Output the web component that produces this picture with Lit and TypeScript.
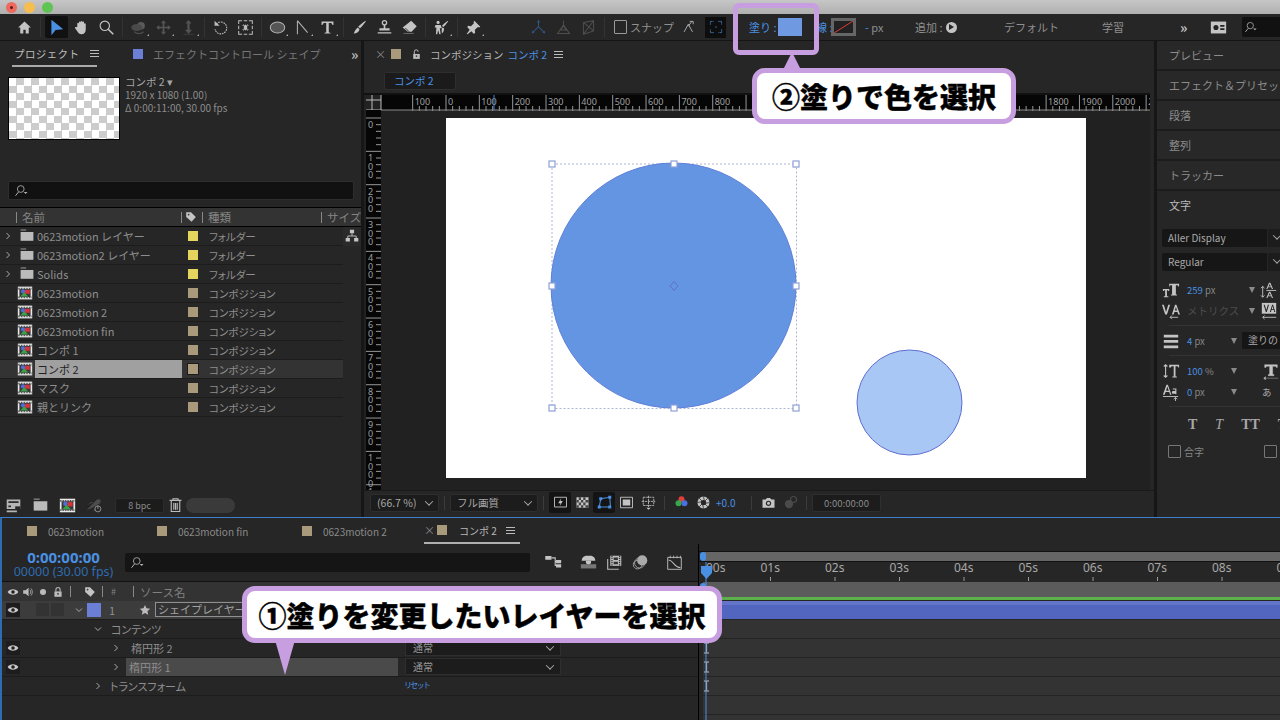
import { LitElement, html, css, svg, nothing } from "lit";
import { customElement } from "lit/decorators.js";

const I: Record<string, any> = {
  home: svg`<path d="M10 3 2.500 10H5v7h3.600v-4.500h2.800V17H15v-7h2.500z" fill="#c4c4c4"/>`,
  arrow: svg`<path d="M4 1v18l5-6 9-1z" fill="#4a90e2"/>`,
  hand: svg`<path d="M5 9V5.500a1 1 0 0 1 2 0V4a1 1 0 0 1 2 0v-.7a1 1 0 0 1 2 0V4a1 1 0 0 1 2 0v2a1 1 0 0 1 2 0v6c0 4-2 6-5 6-2.500 0-3.500-1-5-3.500L2.500 11c-.8-1.300.8-2.300 1.800-1.200z" fill="#c4c4c4"/>`,
  zoom: svg`<circle cx="8" cy="8" r="5.500" fill="none" stroke="#c4c4c4" stroke-width="1.300"/><path d="m12 12 6 6" stroke="#c4c4c4" stroke-width="1.800"/>`,
  orbit: svg`<circle cx="13" cy="8" r="4.500" fill="#5a5a5a"/><ellipse cx="8" cy="10" rx="6.500" ry="4" fill="#4a4a4a"/><path d="M5 15c3 3 8 3 11 0" fill="none" stroke="#4e4e4e" stroke-width="1.300"/>`,
  move: svg`<path d="M10 1.500 13 5h-2v4h4V7l3.500 3L15 13v-2h-4v4h2l-3 3.500L7 15h2v-4H5v2l-3.500-3L5 7v2h4V5H7z" fill="#555"/>`,
  updown: svg`<path d="M10 1.500 13 5h-2v8h2.500L10 17 6.500 13H9V5H7zM4 18h12" fill="#555" stroke="#555" stroke-width=".6"/>`,
  rotate: svg`<path d="M5 6a7 7 0 1 1-1.500 6" fill="none" stroke="#bcbcbc" stroke-width="1.300" stroke-dasharray="2 1"/><path d="M3 2v6h6z" fill="#bcbcbc"/>`,
  region: svg`<path d="M2 6V2h4M14 2h4v4M18 14v4h-4M6 18H2v-4M8 2h4M8 18h4M2 8v4M18 8v4" fill="none" stroke="#bcbcbc" stroke-width="1.200"/><path d="M6 8h2V6zM14 8h-2V6zM6 12h2v2zM14 12h-2v2z" fill="#bcbcbc"/><path d="M8 8l2-1.500L12 8v4l-2 1.500L8 12z" fill="#bcbcbc"/>`,
  ellipse: svg`<ellipse cx="10" cy="10" rx="8.500" ry="6.500" fill="#555" stroke="#b4b4b4" stroke-width="1.200"/>`,
  pen: svg`<path d="M4 2v16M4 2l12 14" fill="none" stroke="#b4b4b4" stroke-width="1.200"/>`,
  t: svg`<path d="M3 3h14v4h-1.200c-.3-1.500-1-2.200-2.800-2.200h-1.500V15c0 1 .6 1.200 2 1.300V17H6.500v-.7c1.400-.1 2-.3 2-1.300V4.800H7c-1.800 0-2.500.7-2.800 2.200H3z" fill="#c4c4c4"/>`,
  brush: svg`<path d="M17.500 2c.5.500-5 7.500-7 9L8.500 9.200C10 7 17 1.500 17.500 2zM8 10l2 2c-.3 3-3 5-7 5 1.500-1 1-4 5-7z" fill="#c4c4c4"/>`,
  stamp: svg`<circle cx="10" cy="4.500" r="2.500" fill="none" stroke="#c4c4c4" stroke-width="1.500"/><path d="M9 7h2v4h5v2.500H4V11h5zM2 15.500h16V17H2z" fill="#c4c4c4"/>`,
  eraser: svg`<path d="m12 2 6.500 6.500-6 6.500H8L2 10z" fill="#c4c4c4"/><path d="m5 10.500 4.500 4.500" stroke="#262626" stroke-width="1"/><path d="M3 17h12" stroke="#888" stroke-width=".8"/>`,
  puppet: svg`<circle cx="6" cy="4" r="1.800" fill="#c4c4c4"/><path d="M3 7h6l1.500 4H8l1 7H7.500L6 13l-1 5H3.500L4 10H2z" fill="#c4c4c4"/><path d="M18 2c.4.400-4 6-6 7.500L10.500 8C12 6 17.500 1.600 18 2zM11 10l2 1c0 3-1 5-2.500 6 0-2-1-4 .5-7z" fill="#c4c4c4"/>`,
  pin: svg`<path d="m11 2 7 7-1.500 1-1.500-.5-3.500 3.500.5 3-1.500 1.500-3-3L3 18l-1-.5 3.500-5-3-3L4 8l3 .5L10.500 5 10 3.500z" fill="#c4c4c4"/>`,
  axis1: svg`<path d="M10 9V2M10 9l-7 7M10 9l7 7" fill="none" stroke="#2f5580" stroke-width="1.200"/><path d="M10 1 8 4h4zM2 17l3.500-.8-2.700-2.700zM18 17l-3.500-.8 2.700-2.700z" fill="#2f5580"/>`,
  axis2: svg`<path d="M10 2v5M10 7l-7 10h14zM10 7l-3 6h6z" fill="none" stroke="#4e4e4e" stroke-width="1.200"/>`,
  axis3: svg`<path d="M4 4l12-2v12L4 18zM4 4l12 10M16 2 4 18" fill="none" stroke="#4e4e4e" stroke-width="1.200"/>`,
  snap: svg`<path d="M3 17 9 6l6 11M9 9l5-7M11 2h5v4" fill="none" stroke="#b4b4b4" stroke-width="1.300"/>`,
  focus: svg`<path d="M3 7V3h4M13 3h4v4M17 13v4h-4M7 17H3v-4" fill="none" stroke="#4a90e2" stroke-width="1.200" stroke-dasharray="1.500 1"/><path d="M9 10h2" stroke="#4a90e2"/>`,
  search: svg`<circle cx="9" cy="8" r="4.500" fill="none" stroke="#b4b4b4" stroke-width="1.100"/><path d="M6 12l-4 5" stroke="#b4b4b4" stroke-width="1.300"/><path d="M13 12h5l-2.500 2.500z" fill="#b4b4b4"/>`,
  interp: svg`<path d="M2 3h16v11H2zM2 16h12v2H2z" fill="#b4b4b4"/><path d="M4 5h12v2H4z" fill="#262626"/><path d="M4 10h3v2H4z" fill="#262626"/><rect x="12" y="11" width="6" height="4" fill="#262626"/>`,
  ws: svg`<path d="M1 3h18v14H1z" fill="#c4c4c4"/><circle cx="7" cy="10" r="3" fill="#222"/><path d="M12 7h5v2h-5zM12 11h5v2h-5z" fill="#222"/>`,
  folder: svg`<path d="M2 5h16v11H2z" fill="#bbb"/><path d="M2 2.500h7" stroke="#bbb"/>`,
  comp: svg`<path d="M1 2h18v16H1z" fill="#e8e8e8"/><path d="M1 4.500h18M1 15.500h18" stroke="#333" stroke-dasharray="1 1" stroke-width="2"/><path d="M3 5h14v10H3z" fill="#3b3b3b"/><circle cx="7.500" cy="8" r="2.600" fill="#4a6fd8"/><path d="M10 6h6v5h-6z" fill="#d8333a"/><path d="M4 14.500 9 9l5 5.500z" fill="#3ba24a"/>`,
  rocket: svg`<path d="M1 15 13 3l4 0v4L7 13l-3 1zM2 9l4-3 3 0zM8 17l3-4 0 3z" fill="#4c4c4c"/><circle cx="14" cy="14" r="3.500" fill="none" stroke="#999"/><path d="M14 10v4" stroke="#999"/>`,
  trash: svg`<path d="M3 4h14M7 4V2h6v2M5 4v13h10V4M8 7v8M10 7v8M12 7v8" fill="none" stroke="#bcbcbc" stroke-width="1.300"/>`,
  flow: svg`<path d="M7 1h6v5H7zM1 13h6v5H1zM13 13h6v5h-6z" fill="#c4c4c4"/><path d="M10 6v4M4 13v-3h12v3" fill="none" stroke="#c4c4c4" stroke-width="1.300"/>`,
  tlflow: svg`<path d="M1 3h6v3H1zM8 4.500h4v9h2M12 9h2" fill="none" stroke="#c4c4c4" stroke-width="1.300"/><path d="M1 3h6v3H1zM13 7h6v4h-6zM13 12h6v4h-6z" fill="#c4c4c4"/>`,
  tag: svg`<path d="M2 2h8l8 8-7 8-9-8z" fill="#c4c4c4"/><circle cx="6" cy="6" r="1.400" fill="#333"/>`,
  eye: svg`<path d="M1 10c4-6 14-6 18 0-4 6-14 6-18 0z" fill="#c8c8c8"/><circle cx="10" cy="10" r="3" fill="#222"/>`,
  speaker: svg`<path d="M2 7h4l5-4v14l-5-4H2z" fill="#bbb"/><path d="M13 6c2 2 2 6 0 8M15 4c3 3 3 9 0 12" fill="none" stroke="#bbb" stroke-width="1.200"/>`,
  dot: svg`<circle cx="10" cy="10" r="5" fill="#bbb"/>`,
  lock: svg`<path d="M4 9h12v9H4z" fill="#bbb"/><path d="M6.500 9V6a3.500 3.500 0 0 1 7 0v3" fill="none" stroke="#bbb" stroke-width="1.800"/><circle cx="10" cy="13" r="1.500" fill="#333"/>`,
  unlock: svg`<path d="M4 9h12v9H4z" fill="#bbb"/><path d="M6 9V5a3.500 3.500 0 0 1 7 0" fill="none" stroke="#bbb" stroke-width="1.800"/><circle cx="10" cy="13" r="1.500" fill="#333"/>`,
  star: svg`<path d="m10 1.500 2.600 5.600 6 .7-4.500 4.100 1.200 6.100L10 15l-5.300 3 1.200-6.100L1.400 7.800l6-.7z" fill="#bbb"/>`,
  flash: svg`<path d="M2 3h16v13H2z" fill="none" stroke="#c4c4c4" stroke-width="1.200"/><path d="m11 4-4 7h3l-1 4 4-7h-3z" fill="#c4c4c4"/>`,
  grid: svg`<path d="M2 3h16v14H2z" fill="#c4c4c4"/><path d="M5 3h3v3.500H5zM11 3h3v3.500h-3zM8 6.500h3V10H8zM14 6.500h4V10h-4zM2 6.500h3V10H2zM5 10h3v3.500H5zM11 10h3v3.500h-3zM8 13.500h3V17H8zM14 13.500h4V17h-4zM2 13.500h3V17H2z" fill="#444"/>`,
  mask: svg`<path d="M3 16 5 5l12-2 1 13z" fill="none" stroke="#4a90e2" stroke-width="1.400"/><path d="M1 14h4v4H1zM3 3h4v4H3zM15 1h4v4h-4zM15 14h4v4h-4z" fill="#4a90e2"/>`,
  safe: svg`<path d="M2 3h16v14H2z" fill="none" stroke="#c4c4c4" stroke-width="1.200"/><path d="M5 6h10v8H5z" fill="#c4c4c4"/>`,
  gridb: svg`<path d="M3 3h14v11H3zM10 1v15M1 8.500h18" fill="none" stroke="#c4c4c4" stroke-width="1.100" stroke-dasharray="3 1"/><path d="M7 17h6l-3 2.500z" fill="#c4c4c4"/>`,
  rgb: svg`<circle cx="10" cy="5.500" r="4" fill="#e0403a"/><circle cx="6" cy="11" r="4" fill="#36a84a"/><circle cx="14" cy="11" r="4" fill="#4a6fe0"/>`,
  exposure: svg`<circle cx="10" cy="10" r="8" fill="#c4c4c4"/><circle cx="10" cy="10" r="3.500" fill="#262626"/><path d="m10 2 1 5M18 10l-5 1M10 18l-1-5M2 10l5-1M4 4l4 4M16 4l-4 4M16 16l-4-4M4 16l4-4" stroke="#262626"/>`,
  camera: svg`<path d="M2 6h4l2-2h4l2 2h4v11H2z" fill="#c4c4c4"/><circle cx="10" cy="11" r="3.500" fill="#262626"/><circle cx="10" cy="11" r="2" fill="#c4c4c4"/>`,
  snapshot: svg`<circle cx="14" cy="6" r="4" fill="none" stroke="#4a4a4a" stroke-width="1.500"/><circle cx="8" cy="12" r="5.500" fill="#4a4a4a"/>`,
  shy: svg`<path d="M8 2c-4 0-6 3-6 6h16c0-3-2-6-6-6z" fill="#c4c4c4"/><path d="M7 8h6v3l-3 2-3-2z" fill="#c4c4c4"/><path d="M1 12h18v5H1z" fill="#777"/>`,
  filmstack: svg`<path d="M5 2h13v12H5z" fill="#bbb"/><path d="M7 2v12M16 2v12" stroke="#333" stroke-dasharray="1.500 1" stroke-width="1.500"/><path d="M9 4h5v3H9zM9 9h5v3H9z" fill="#333"/><path d="M2 6v12h13" fill="none" stroke="#bbb" stroke-width="1.300"/>`,
  blend: svg`<circle cx="12" cy="7.500" r="6" fill="#aaa"/><circle cx="9" cy="10.500" r="6" fill="none" stroke="#aaa"/><circle cx="6.500" cy="12.500" r="5" fill="none" stroke="#aaa"/>`,
  curve: svg`<path d="M2 4h16v14H2z" fill="none" stroke="#bbb" stroke-width="1.100"/><path d="M5 2v3M9 2v3M13 2v3M17 2v3" stroke="#bbb"/><path d="M3 7c6 0 6 9 14 9" fill="none" stroke="#bbb" stroke-width="1.200"/>`,
  tsize: svg`<path d="M8 3h11v3h-1c-.2-1-.6-1.200-1.600-1.200h-1V15h1.200v1H10v-1h1.200V4.800h-1C9.200 4.800 8.800 5 8.600 6H8zM1 9h7v2H7l-.5-.8H5.500V17H7v1H2v-1h1.500v-6.800h-1L2 11H1z" fill="#c4c4c4"/>`,
  va: svg`<path d="M0 3h2l2.500 8L7 3h2L5.500 14h-2zM7 14l4-11M11 14l3.500-11h1.500L20 14h-2l-.8-3h-3.400l-.8 3zM14.300 9.500h2.400l-1.200-4z" fill="#c4c4c4"/><path d="M9 17h9M11 15l-2 2 2 2" fill="none" stroke="#c4c4c4"/>`,
  lines: svg`<path d="M2 3h16v3H2zM2 9h16v3H2zM2 15h16v3H2z" fill="#c4c4c4"/>`,
  vscale: svg`<path d="M4 3v14M2 5l2-2 2 2M2 15l2 2 2-2" fill="none" stroke="#c4c4c4" stroke-width="1.200"/><path d="M8 3h11v3h-1c-.2-1-.6-1.200-1.600-1.200H15V16h1.500v1.200h-5V16H13V4.800h-1.400c-1 0-1.400.2-1.600 1.200H8z" fill="#c4c4c4"/>`,
  baseline: svg`<path d="M1 13 5 2h1.500l4 11H9l-1-3H4l-1 3zM4.500 8.500h3L6 4zM12 6h4v6.500h-1.200V12h-2.300c-1 0-1.500-.7-1.500-1.500S11.500 9 12.500 9h2.300V7.200H12z" fill="#c4c4c4"/><path d="M1 15h17M15 20v-4M13 18l2-2 2 2" fill="none" stroke="#c4c4c4"/>`,
  leading: svg`<path d="M7 9l3-7h1.500l3 7h-1.300l-.7-2H9l-.7 2zM9.500 6h2.500L10.800 3.200zM7 19l3-7h1.500l3 7h-1.300l-.7-2H9l-.7 2zM9.500 16h2.500l-1.200-2.800z" fill="#c4c4c4"/><path d="M3 6v12M1 8l2-2 2 2M1 16l2 2 2-2M7 10.500h11" fill="none" stroke="#c4c4c4"/>`,
  vak: svg`<path d="M2 1h16v12H2z" fill="#c4c4c4"/><path d="M4 3l2.500 8h1L10 3H8.800L7 9 5.200 3zM11 11l2.500-8h1l2.500 8h-1.200l-.5-2h-2.600l-.5 2zM13 8h2l-1-3.500z" fill="#222"/><path d="M3 17h15M5 15l-2 2 2 2" fill="none" stroke="#c4c4c4"/>`,
  hscale: svg`<path d="M3 3h14v3h-1c-.2-1-.6-1.200-1.600-1.200h-2.600V14h1.500v1.200H7V14h1.500V4.800H6c-1 0-1.400.2-1.600 1.200H3zM2 18h16M4 16l-2 2 2 2" fill="#c4c4c4" stroke="#c4c4c4" stroke-width=".5"/>`,
};

const icon = (n: string, size = 20) => html`<svg class="ic" width=${size} height=${size} viewBox="0 0 20 20">${I[n]}</svg>`;
const tool = (n: string, corner = false) => html`<span class="tool ${n === "arrow" ? "on" : ""}">${icon(n)}${corner ? html`<i class="corner"></i>` : nothing}</span>`;
const sep = () => html`<span class="sep"></span>`;

const projectRows = [
  { kind: "folder", name: "0623motion レイヤー", sw: "#e5d45e", type: "フォルダー" },
  { kind: "folder", name: "0623motion2 レイヤー", sw: "#e5d45e", type: "フォルダー" },
  { kind: "folder", name: "Solids", sw: "#e5d45e", type: "フォルダー" },
  { kind: "comp", name: "0623motion", sw: "#a99a7c", type: "コンポジション" },
  { kind: "comp", name: "0623motion 2", sw: "#a99a7c", type: "コンポジション" },
  { kind: "comp", name: "0623motion fin", sw: "#a99a7c", type: "コンポジション" },
  { kind: "comp", name: "コンポ 1", sw: "#a99a7c", type: "コンポジション" },
  { kind: "comp", name: "コンポ 2", sw: "#a99a7c", type: "コンポジション", sel: true },
  { kind: "comp", name: "マスク", sw: "#a99a7c", type: "コンポジション" },
  { kind: "comp", name: "親とリンク", sw: "#a99a7c", type: "コンポジション" },
];

function hRuler() {
  const out: any[] = [];
  const x0 = 446 - 366;
  const step = 33.34;
  for (let i = -1; i < 22; i++) {
    const x = x0 + i * step;
    const abs = x + 366;
    if (abs > 1150) continue;
    out.push(svg`<path d="M${x} 0v16" stroke="#bdbdbd" stroke-width=".8"/>`);
    for (let k = 1; k < 5; k++) out.push(svg`<path d="M${x + (k * step) / 5} 11v5" stroke="#bdbdbd" stroke-width=".8"/>`);
    // Labels behind the callout are fully hidden in the reference.
    if (abs + 20 > 752 && abs < 1016) continue;
    const label = i < 0 ? "100" : String(i * 100);
    out.push(svg`<text x=${x + 2} y="10" class="rt">${label}</text>`);
  }
  return out;
}
function vRuler() {
  const out: any[] = [];
  const step = 33.34;
  for (let i = 0; i < 12; i++) {
    const y = 8 + i * step;
    if (y > 378) continue;
    out.push(svg`<path d="M0 ${y}h15" stroke="#bdbdbd" stroke-width=".8"/>`);
    for (let k = 1; k < 5; k++) out.push(svg`<path d="M10 ${y + (k * step) / 5}h5" stroke="#bdbdbd" stroke-width=".8"/>`);
    const s = String(i * 100).split("");
    out.push(svg`<text class="rt">${s.map((c, j) => svg`<tspan x="2" y=${y + 10 + j * 8.5}>${c}</tspan>`)}</text>`);
  }
  return out;
}
function handles() {
  const pts = [[552, 164], [674, 164], [796, 164], [552, 286], [796, 286], [552, 408], [674, 408], [796, 408]];
  return pts.map(([x, y]) => svg`<rect x=${x - 3} y=${y - 3} width="6" height="6" fill="#fff" stroke="#8ea0d8" stroke-width="1.200"/>`);
}

@customElement("app-root")
export class AppRoot extends LitElement {
  static styles = css`
    :host { display: block; width: 1280px; height: 720px; position: relative; overflow: hidden; background: #161616; font-family: "Noto Sans CJK JP", "Noto Sans", sans-serif; font-size: 10px; color: #9c9c9c; }
    * { box-sizing: border-box; }
    .ic { display: block; flex: none; }
    .titlebar { height: 14px; background: linear-gradient(#c6c6c6, #b0b0b0); display: flex; align-items: center; gap: 7px; padding-left: 6px; }
    .light { width: 11px; height: 11px; border-radius: 50%; display: flex; align-items: center; justify-content: center; flex: none; }
    .light.r { background: #ee6a5f; }
    .light.r::after { content: ""; width: 3px; height: 3px; border-radius: 50%; background: #5c1a14; }
    .light.y { background: #f6bd4f; }
    .light.g { background: #5fc454; }
    .toolbar { height: 27px; background: #262626; display: flex; align-items: center; padding-left: 12px; border-bottom: 1px solid #151515; }
    .tool { width: 25px; height: 22px; display: flex; align-items: center; justify-content: center; position: relative; flex: none; }
    .tool .ic { width: 17px; height: 17px; }
    .tool.on { background: #111; border-radius: 2px; width: 23px; margin: 0 1px; }
    .corner { position: absolute; right: 2px; bottom: 2px; border: 1.500px solid transparent; border-right-color: #aaa; border-bottom-color: #aaa; }
    .sep { width: 7px; height: 20px; flex: none; position: relative; }
    .sep::after { content: ""; position: absolute; left: 3px; top: 0; bottom: 0; width: 1px; background: #333; }
    .spacer40 { width: 40px; flex: none; }
    .snapbox { width: 13px; height: 14px; border: 1.500px solid #9a9a9a; border-radius: 1px; margin-left: 6px; flex: none; }
    .tbtext { white-space: nowrap; flex: none; color: #909090; font-size: 11px; }
    .snaplabel { margin-left: 3px; width: 48px; }
    .snapicon { width: 21px; display: flex; justify-content: center; flex: none; }
    .snapicon .ic { width: 14px; height: 14px; }
    .focusbox { width: 21px; height: 21px; background: #0e0e0e; display: flex; align-items: center; justify-content: center; flex: none; margin-left: 6px; }
    .fillgroup { margin-left: 23px; display: flex; align-items: center; flex: none; color: #4a90e2; width: 53px; justify-content: space-between; font-size: 11px; white-space: nowrap; }
    .fillsw { width: 24px; height: 18px; background: #6f99e0; flex: none; }
    .strokegroup { display: flex; align-items: center; flex: none; width: 60px; gap: 1px; }
    .strokelabel { width: 14px; color: #4a90e2; font-size: 11px; white-space: nowrap; margin-left: 14px; flex: none; text-align: right; }
    .strokesw { width: 25px; height: 18px; background: #555; border: 3px solid #666; flex: none; display: block; }
    .strokesw svg { display: block; }
    .px { width: 50px; flex: none; margin-left: 3px; }
    .px b { color: #4a90e2; font-weight: 400; }
    .addgroup { display: flex; align-items: center; gap: 3px; width: 65px; flex: none; }
    .play { width: 11px; height: 11px; border-radius: 50%; background: #c4c4c4; flex: none; display: flex; align-items: center; justify-content: center; padding-left: 1px; }
    .play::after { content: ""; border-left: 5px solid #262626; border-top: 3px solid transparent; border-bottom: 3px solid transparent; }
    .wsdef { margin-left: 24px; width: 98px; font-size: 11px; flex: none; white-space: nowrap; color: #8f8f8f; }
    .wsstudy { width: 78px; font-size: 11px; flex: none; color: #8f8f8f; }
    .more { width: 18px; color: #c4c4c4; font-weight: 700; font-size: 14px; flex: none; line-height: 1; }
    .wsgap { width: 12px; flex: none; }
    .wsicon { width: 17px; flex: none; }
    .tsearch { width: 50px; height: 20px; background: #111; margin-left: 15px; display: flex; align-items: center; padding-left: 2px; flex: none; border-radius: 2px; }

    .main { height: 476px; display: flex; gap: 3px; padding-left: 0; }
    .project { width: 361px; background: #262626; display: flex; flex-direction: column; flex: none; }
    .ptabs { height: 26px; display: flex; align-items: center; position: relative; padding-left: 14px; flex: none; }
    .ptab { color: #bdbdbd; font-size: 10.500px; letter-spacing: .4px; white-space: nowrap; flex: none; }
    .ptabline { width: 85px; height: 26px; border-bottom: 2px solid #aaa; margin-left: -2px; padding-left: 2px; display: flex; align-items: center; gap: 11px; flex: none; }
    .burger { width: 9px; height: 7px; border-top: 1px solid #bbb; border-bottom: 1px solid #bbb; position: relative; flex: none; }
    .burger::after { content: ""; position: absolute; left: 0; right: 0; top: 2px; height: 1px; background: #bbb; }
    .efsw { width: 10px; height: 10px; background: #6b7fd7; margin-left: 36px; flex: none; }
    .eftext { margin-left: 10px; color: #767676; font-size: 11px; width: 174px; white-space: nowrap; flex: none; }
    .chev2 { color: #bbb; font-weight: 700; font-size: 14px; line-height: 1; margin-left: 24px; }
    .pinfo { height: 114px; display: flex; padding: 10px 0 0 8px; gap: 5px; flex: none; }
    .thumb { width: 112px; height: 63px; border: 1px solid #000; background: repeating-conic-gradient(#ccc 0 25%, #fff 0 50%) 0 0 / 15px 15px; flex: none; }
    .meta { line-height: 13px; font-size: 10px; color: #8c8c8c; margin-top: -2px; white-space: nowrap; }
    .meta .t { font-size: 10.500px; color: #a5a5a5; }
    .psearch { height: 19px; margin: 0 7px 0 8px; background: #111; border: 1px solid #2e2e2e; border-radius: 2px; display: flex; align-items: center; padding-left: 5px; flex: none; }
    .psearch .ic { width: 15px; height: 15px; }
    .phead { margin-top: 7px; height: 20px; background: #333; border-top: 1px solid #000; border-bottom: 1px solid #000; display: grid; grid-template-columns: 17px 165px 21px 119px 1fr; align-items: center; flex: none; overflow: hidden; font-size: 11.500px; color: #858585; }
    .phead > div { height: 11px; line-height: 11px; border-right: 1px solid #888; padding-left: 5px; white-space: nowrap; display: flex; align-items: center; }
    .phead > div:first-child { padding: 0; }
    .phead > div:last-child { border: none; }
    .phead .ic { width: 12px; height: 12px; margin-left: -2px; }
    .pbody { display: flex; flex: 1; min-height: 0; }
    .plist { width: 343px; flex: none; }
    .pside { flex: 1; display: flex; justify-content: center; padding-top: 2px; background: #2a2a2a; height: 19px; }
    .pside .ic { width: 14px; height: 14px; }
    .prow { height: 19px; display: grid; grid-template-columns: 35px 147px 28px 1fr; align-items: center; border-bottom: 1px solid #1c1c1c; font-size: 11px; color: #8e8e8e; white-space: nowrap; }
    .pcell0 { display: flex; align-items: center; height: 100%; }
    .arrowcell { width: 19px; padding-left: 4px; flex: none; display: flex; }
    .pcell0 .ic { width: 16px; height: 16px; }
    .compic { margin-left: 17px; }
    .pname { height: 100%; display: flex; align-items: center; padding-left: 2px; overflow: hidden; }
    .prow.sel { background: #333; }
    .prow.sel .pname { background: #a0a0a0; color: #222; height: 18px; }
    .psw { width: 10px; height: 10px; margin-left: 6px; }
    .prow.sel .psw { outline: 1px solid #1c1c1c; }
    .ptype { font-size: 10.500px; font-feature-settings: "palt"; margin-left: -1px; }
    .pfoot { height: 21px; margin-bottom: 1px; display: flex; align-items: center; padding-left: 5px; flex: none; }
    .pfoot .ic { width: 17px; height: 17px; flex: none; }
    .fslot { width: 27px; flex: none; display: flex; justify-content: center; margin-left: -5px; margin-right: 5px; }
    .fslot.trash { margin-left: 0; margin-right: -5px; width: 22px; }
    .bpc { width: 49px; height: 15px; background: #1c1c1c; border: 1px solid #2c2c2c; border-radius: 2px; text-align: center; line-height: 13px; font-size: 9px; color: #8a8a8a; margin-left: 2px; flex: none; }
    .pill { width: 49px; height: 15px; border-radius: 8px; background: #3a3a3a; margin-left: 5px; flex: none; }

    .viewer { width: 790px; background: #262626; display: flex; flex-direction: column; flex: none; }
    .vtabs { height: 24px; display: flex; align-items: center; padding: 2px 0 0 11px; font-size: 10.500px; color: #b5b5b5; flex: none; white-space: nowrap; }
    .vx { width: 16px; color: #888; flex: none; font-size: 11px; }
    .vsq { width: 10px; height: 10px; background: #a99a7c; flex: none; margin-right: 10px; }
    .vtabs .ic { width: 11px; height: 11px; margin-right: 8px; }
    .vtabs b { color: #4a90e2; font-weight: 400; margin: 0 7px 0 4px; }
    .vbtnrow { height: 28px; padding: 7px 0 0 20px; flex: none; }
    .vbtn { width: 72px; height: 18px; background: #1b1b1b; border: 1px solid #2e2e2e; border-radius: 2px; color: #4a90e2; line-height: 15px; padding-left: 9px; font-size: 10.500px; }
    .canvas { display: block; flex: none; }
    .rt { font: 9px "Noto Sans", sans-serif; fill: #a0a0a0; }
    .vbar { flex: 1; display: flex; align-items: center; padding: 0 0 3px 6px; border-top: 1px solid #1a1a1a; }
    .vbar .ic { width: 15px; height: 15px; }
    .vselect { height: 18px; background: #1c1c1c; border: 1px solid #2e2e2e; border-radius: 2px; display: flex; align-items: center; justify-content: space-between; padding: 0 6px; flex: none; font-size: 10.500px; color: #a8a8a8; white-space: nowrap; }
    .vselect.zoom { width: 69px; }
    .vselect.qual { width: 88px; }
    .vsep { width: 1px; height: 14px; background: #3c3c3c; margin: 0 5px; flex: none; }
    .vchev { width: 6px; height: 6px; border-right: 1px solid #aaa; border-bottom: 1px solid #aaa; transform: rotate(45deg) translate(-1px, -1px); flex: none; }
    .vb { width: 22px; height: 21px; display: flex; align-items: center; justify-content: center; flex: none; }
    .vb.dark { background: #141414; border-radius: 2px; }
    .vtime { width: 69px; height: 18px; background: #1c1c1c; border: 1px solid #2e2e2e; border-radius: 2px; font-size: 9.500px; text-align: center; line-height: 16px; color: #8c8c8c; flex: none; }
    .plus { color: #4a90e2; width: 32px; flex: none; font-size: 10px; padding-left: 2px; }

    .right { flex: 1; background: #262626; display: flex; flex-direction: column; overflow: hidden; min-width: 0; }
    .rbtn { height: 30px; padding: 4px 0 0 12px; border-bottom: 2px solid #1c1c1c; background: #282828; color: #8c8c8c; font-size: 11px; white-space: nowrap; flex: none; line-height: 20px; }
    .rhead { height: 38px; line-height: 28px; padding-left: 12px; color: #b8b8b8; font-size: 11px; flex: none; }
    .rsel { height: 18px; margin: 0 0 6px 5px; display: flex; gap: 1px; flex: none; width: 140px; }
    .rsel div:first-child { width: 105px; background: #161616; color: #aaa; padding-left: 6px; line-height: 17px; font-size: 10px; border-radius: 2px 0 0 2px; white-space: nowrap; }
    .rsel div:last-child { flex: 1; background: #1c1c1c; display: flex; padding: 5px 0 0 6px; }
    .rrow { height: 21px; display: flex; align-items: center; padding-left: 5px; flex: none; font-size: 9.500px; color: #858585; white-space: nowrap; }
    .rrow.first { margin-top: 2px; }
    .rrow .ic { width: 18px; height: 18px; flex: none; }
    .rrow b { font-weight: 400; color: #4a90e2; }
    .rval { width: 69px; padding-left: 7px; flex: none; }
    .rval.short { width: 51px; }
    .tri { width: 0; height: 0; border-left: 3.500px solid transparent; border-right: 3.500px solid transparent; border-top: 6px solid #8a8a8a; flex: none; margin-right: 5px; }
    .rdim { color: #4c4c4c; font-size: 10.500px; }
    .rline { height: 1px; background: #333; margin: 4px 0 4px 12px; flex: none; }
    .fillsel { width: 60px; height: 17px; background: #161616; padding-left: 6px; line-height: 16px; color: #aaa; font-size: 10px; flex: none; margin-left: 0; }
    .gap24 { width: 20px; flex: none; }
    .ruby { color: #aaa; }
    .rstyles { height: 28px; display: flex; align-items: center; padding-left: 31px; gap: 18px; font: 700 14px "Liberation Serif", serif; color: #a8a8a8; flex: none; white-space: nowrap; }
    .rstyles i { font-weight: 400; }
    .rcheck { height: 24px; display: flex; align-items: center; padding-left: 11px; font-size: 10px; color: #858585; flex: none; white-space: nowrap; }
    .cb { width: 13px; height: 13px; border: 1.500px solid #777; border-radius: 1px; margin-right: 3px; flex: none; }
    .cb2 { margin-left: 60px; }

    .timeline { position: absolute; left: 0; right: 0; top: 517px; bottom: 0; background: #262626; border-top: 1px solid #3c7fd0; border-left: 2px solid #2f6bb0; display: flex; flex-direction: column; }
    .ttabs { height: 26px; display: flex; align-items: center; font-size: 10px; color: #8a8a8a; flex: none; padding-left: 25px; white-space: nowrap; }
    .ttab { display: flex; align-items: center; gap: 11px; flex: none; }
    .ttab i { width: 10px; height: 10px; background: #a99a7c; flex: none; }
    .ttab.w1 { width: 130px; }
    .ttab.w2 { width: 145px; }
    .ttab.w3 { width: 122px; }
    .ttabactive { display: flex; align-items: center; width: 96px; height: 26px; border-bottom: 2px solid #b0b0b0; color: #b8b8b8; flex: none; }
    .ttabactive .x { width: 13px; flex: none; color: #888; font-size: 11px; }
    .ttabactive i { width: 10px; height: 10px; background: #a99a7c; flex: none; margin-right: 12px; }
    .ttabactive .burger { margin-left: 9px; }
    .tbody { flex: 1; display: flex; min-height: 0; }
    .tleft { width: 697px; flex: none; border-right: 1px solid #000; display: flex; flex-direction: column; }
    .ttop { height: 38px; display: flex; flex: none; border-bottom: 1px solid #111; }
    .tcode { width: 123px; text-align: center; flex: none; padding-top: 6px; }
    .tcode b { display: block; color: #4a90e2; font-family: "Noto Sans", sans-serif; font-size: 15px; line-height: 15px; font-weight: 700; }
    .tcode span { display: block; color: #2f6bb0; font-family: "Noto Sans", sans-serif; font-size: 12.500px; line-height: 14px; white-space: nowrap; }
    .tsearch2 { width: 405px; height: 19px; margin-top: 9px; background: #151515; border-radius: 2px; display: flex; align-items: center; padding-left: 5px; flex: none; }
    .tsearch2 .ic { width: 15px; height: 15px; }
    .ttools { display: flex; align-items: center; padding-left: 7px; height: 36px; }
    .ttools span { width: 26px; display: flex; justify-content: center; flex: none; }
    .ttools .first { width: 32px; margin-right: 6px; }
    .ttools .last { margin-left: 8px; }
    .ttools .ic { width: 17px; height: 17px; }
    .thead { height: 19px; background: #333; display: flex; align-items: center; flex: none; font-size: 11.500px; color: #808080; padding-left: 5px; }
    .thead .ic { width: 12px; height: 12px; margin-right: 3px; }
    .vline { width: 1px; height: 11px; background: #888; flex: none; }
    .thg1 { width: 3px; flex: none; }
    .thg2 { width: 13px; flex: none; }
    .thnum { width: 30px; padding-left: 8px; font-size: 9px; flex: none; }
    .thname { padding-left: 6px; white-space: nowrap; }
    .trow { height: 19px; display: flex; align-items: center; padding-bottom: 1px; border-bottom: 1px solid #1c1c1c; font-size: 11px; color: #8e8e8e; position: relative; flex: none; white-space: nowrap; }
    .trow.layer { background: #3c3c3c; }
    .eyebox { width: 14px; height: 14px; background: #1d1d1d; margin-left: 4px; flex: none; display: flex; align-items: center; justify-content: center; }
    .eyebox .ic { width: 12px; height: 12px; }
    .lbox { width: 13px; height: 13px; background: #333; flex: none; margin-right: 2px; }
    .g16 { width: 16px; flex: none; }
    .g11 { width: 9px; flex: none; }
    .lsw { width: 14px; height: 14px; background: #6b7fd7; flex: none; margin-left: -2px; }
    .lnum { width: 38px; padding-left: 8px; flex: none; }
    .lname { width: 118px; height: 15px; border: 1px solid #8f8f8f; background: #333; padding-left: 2px; line-height: 13px; font-size: 11px; color: #a0a0a0; margin-left: 4px; overflow: hidden; flex: none; }
    .rowinner { display: flex; align-items: center; height: 100%; flex: none; }
    .chevsvg { width: 8px; height: 8px; flex: none; margin-right: 6px; display: block; }
    .m3 { margin-left: 5px; }
    .palt { font-feature-settings: "palt"; }
    .m1 { margin-left: 3px; }
    .m2 { margin-left: 2px; }
    .sel1 { background: #4a4a4a; height: 18px; width: 272px; display: flex; align-items: center; padding-left: 3px; flex: none; margin-left: 0; }
    .mode { width: 156px; height: 17px; background: #1c1c1c; border: 1px solid #2e2e2e; display: flex; align-items: center; justify-content: space-between; padding: 0 7px; color: #999; font-size: 10px; flex: none; position: absolute; left: 403px; top: 0; }
    .reset { position: absolute; left: 402px; top: 2px; color: #4a90e2; font-size: 8px; letter-spacing: -1.700px; }
    .tright { flex: 1; min-width: 0; overflow: hidden; }
    .tl { display: block; }
    .tlt { font: 12px "Noto Sans", sans-serif; fill: #a8a8a8; }

    .hl { position: absolute; left: 733px; top: 3px; width: 86px; height: 52px; border: 5px solid #c79fe0; border-radius: 6px; }
    .callout { position: absolute; background: #fff; border: 5px solid #c79fe0; border-radius: 13px; color: #000; font-weight: 900; font-size: 28px; display: flex; align-items: center; justify-content: center; white-space: nowrap; line-height: 1; -webkit-text-stroke: .4px #000; }
    .c2 { left: 752px; top: 68px; width: 264px; height: 56px; }
    .c1 { left: 242px; top: 586px; width: 480px; height: 57px; }
    .ptr { position: absolute; }
    .p2 { left: 783px; top: 52px; }
    .p1 { left: 275px; top: 640px; }
  `;

  private viewerSvg() {
    return html`<svg class="canvas" width="790" height="397" viewBox="364 93 790 397">
      <rect x="364" y="93" width="790" height="397" fill="#212121"/>
      <rect x="364" y="93" width="790" height="2" fill="#111"/>
      <g transform="translate(366 95)"><rect width="784" height="15" fill="#060606"/>${hRuler()}</g>
      <path d="M381 110h769" stroke="#8a8a8a" stroke-width="1"/>
      <rect x="366" y="95" width="15" height="15" fill="#222"/>
      <path d="M366 100h15M372 95v15M381 95v15M366 110h15" stroke="#bbb" stroke-width="1"/>
      <path d="M494 95v15" stroke="#3f82d8" stroke-width="1"/>
      <svg x="366" y="110" width="15" height="380" viewBox="0 0 15 380"><rect width="15" height="380" fill="#060606"/>${vRuler()}</svg>
      <rect x="1150" y="93" width="4" height="397" fill="#262626"/>
      <rect x="446" y="118" width="640" height="360" fill="#fff"/>
      <rect x="552" y="164" width="244.500" height="244.500" fill="none" stroke="#9aa4c8" stroke-width=".8" stroke-dasharray="2 2"/>
      <circle cx="673.500" cy="285.500" r="122.500" fill="#6495e2" stroke="#5f7fd8" stroke-width="1"/>
      <circle cx="909.500" cy="402.500" r="52.500" fill="#a9c7f5" stroke="#5f6fd0" stroke-width="1"/>
      ${handles()}
      <path d="m674 281.500 4 4.500-4 4.500-4-4.500z" fill="none" stroke="#5f6fc8"/>
    </svg>`;
  }

  private timelineSvg() {
    const labels = ["01s", "02s", "03s", "04s", "05s", "06s", "07s", "08s", "09s"];
    const rows = [620, 639, 658, 677, 696];
    const o = 699;
    return html`<svg class="tl" width="581" height="176" viewBox="${o} 544 581 176">
      <rect x=${o} y="544" width="581" height="176" fill="#262626"/>
      <rect x="703" y="552" width="577" height="9" fill="#666"/>
      <rect x="700" y="552" width="6" height="9" rx="3" fill="#4a90e2"/>
      <rect x=${o} y="551" width="581" height="1" fill="#111"/>
      <rect x=${o} y="561" width="581" height="1" fill="#111"/>
      <text x="706" y="572" class="tlt">00s</text>
      ${labels.map((l, i) => svg`<text x=${770.500 + i * 64.500 - 10} y="572" class="tlt">${l}</text><path d="M${770.500 + i * 64.500} 577v4" stroke="#999"/>`)}
      <rect x="703" y="582" width="577" height="16" fill="#5b5b5b"/>
      <rect x="703" y="597" width="577" height="3" fill="#5bb04a"/>
      <rect x="703" y="601" width="577" height="18" fill="#5266bf"/>
      <rect x="703" y="601" width="577" height="4" fill="#6a7ccc" opacity=".7"/>
      <rect x="703" y="620" width="577" height="100" fill="#333"/>
      ${rows.map((y) => svg`<rect x="703" y=${y + 18} width="577" height="1" fill="#242424"/>`)}
      <rect x=${o} y="582" width="4" height="138" fill="#262626"/>
      <rect x="700" y="583" width="6" height="10" rx="3" fill="#4a90e2"/>
      ${[648, 667, 686].map((y) => svg`<path d="M704 ${y - 5}h5M704 ${y + 5}h5M706.500 ${y - 5}v10" stroke="#bdbdbd" stroke-width="1.200" fill="none"/>`)}
      <path d="M706 562v158" stroke="#4a90e2" stroke-width="1"/>
      <path d="M701 566h11v7l-5.500 6-5.500-6z" fill="#4a90e2"/>
    </svg>`;
  }

  private chev(open: boolean) {
    return html`<svg class="chevsvg" viewBox="0 0 8 8"><path d=${open ? "M1 2.500 4 5.500 7 2.500" : "M2.500 1 5.500 4 2.500 7"} fill="none" stroke="#aaa" stroke-width="1"/></svg>`;
  }

  render() {
    return html`
      <div class="titlebar">
        <span class="light r"></span><span class="light y"></span><span class="light g"></span>
      </div>
      <div class="toolbar">
        ${tool("home")}${sep()}
        ${tool("arrow")}${tool("hand")}${tool("zoom")}${sep()}
        ${tool("orbit", true)}${tool("move", true)}${tool("updown", true)}${sep()}
        ${tool("rotate")}${tool("region")}${sep()}
        ${tool("ellipse", true)}${tool("pen", true)}${tool("t", true)}${sep()}
        ${tool("brush")}${tool("stamp")}${tool("eraser")}${sep()}
        ${tool("puppet", true)}${sep()}
        ${tool("pin", true)}
        <span class="spacer40"></span>
        ${tool("axis1")}${tool("axis2")}${tool("axis3")}${sep()}
        <span class="snapbox"></span><span class="tbtext snaplabel">スナップ</span>
        <span class="snapicon">${icon("snap")}</span>
        <span class="focusbox">${icon("focus", 16)}</span>
        <span class="fillgroup">塗り :<span class="fillsw"></span></span>
        <span class="strokegroup"><span class="strokelabel">線 :</span>
          <span class="strokesw"><svg width="19" height="12" viewBox="0 0 19 12"><rect width="19" height="12" fill="#222"/><path d="M0 12 19 0" stroke="#e03a3a"/></svg></span></span>
        <span class="px tbtext"><b>-</b> px</span>
        <span class="addgroup tbtext">追加 :<span class="play"></span></span>
        <span class="wsdef">デフォルト</span>
        <span class="wsstudy">学習</span>
        <span class="more">»</span>
        <span class="wsgap"></span>
        <span class="wsicon">${icon("ws", 17)}</span>
        <span class="tsearch">${icon("search", 14)}</span>
      </div>

      <div class="main">
        <section class="project">
          <div class="ptabs">
            <div class="ptabline"><span class="ptab">プロジェクト</span><span class="burger"></span></div>
            <span class="efsw"></span>
            <span class="eftext">エフェクトコントロール シェイプ</span>
            <span class="chev2">»</span>
          </div>
          <div class="pinfo">
            <div class="thumb"></div>
            <div class="meta"><div class="t">コンポ 2 ▾</div><div>1920 x 1080 (1.00)</div><div>Δ 0:00:11:00, 30.00 fps</div></div>
          </div>
          <div class="psearch">${icon("search")}</div>
          <div class="phead"><div></div><div>名前</div><div>${icon("tag")}</div><div>種類</div><div>サイズ</div></div>
          <div class="pbody">
            <div class="plist">
              ${projectRows.map((r) => html`<div class="prow ${r.sel ? "sel" : ""}">
                <div class="pcell0">
                  ${r.kind === "folder" ? html`<span class="arrowcell">${this.chev(false)}</span>${icon("folder")}` : html`<span class="compic">${icon("comp")}</span>`}
                </div>
                <div class="pname">${r.name}</div>
                <div><div class="psw" style="background:${r.sw}"></div></div>
                <div class="ptype">${r.type}</div>
              </div>`)}
            </div>
            <div class="pside">${icon("flow")}</div>
          </div>
          <div class="pfoot">
            <span class="fslot">${icon("interp")}</span><span class="fslot">${icon("folder")}</span><span class="fslot">${icon("comp")}</span><span class="fslot">${icon("rocket")}</span>
            <span class="bpc">8 bpc</span>
            <span class="fslot trash">${icon("trash")}</span>
            <span class="pill"></span>
          </div>
        </section>

        <section class="viewer">
          <div class="vtabs">
            <span class="vx">×</span><span class="vsq"></span>${icon("unlock")}
            <span>コンポジション</span><b>コンポ 2</b><span class="burger"></span>
          </div>
          <div class="vbtnrow"><div class="vbtn">コンポ 2</div></div>
          ${this.viewerSvg()}
          <div class="vbar">
            <div class="vselect zoom">(66.7 %)<span class="vchev"></span></div>
            <span class="vsep"></span>
            <div class="vselect qual">フル画質<span class="vchev"></span></div>
            <span class="vsep"></span>
            <span class="vb dark">${icon("flash")}</span><span class="vb">${icon("grid")}</span><span class="vb dark">${icon("mask")}</span><span class="vb">${icon("safe")}</span><span class="vb">${icon("gridb")}</span>
            <span class="vsep"></span>
            <span class="vb">${icon("rgb")}</span><span class="vb">${icon("exposure")}</span>
            <span class="plus">+0.0</span>
            <span class="vsep"></span>
            <span class="vb">${icon("camera")}</span><span class="vb">${icon("snapshot")}</span>
            <span class="vsep"></span>
            <span class="vtime">0:00:00:00</span>
          </div>
        </section>

        <section class="right">
          <div class="rbtn">プレビュー</div>
          <div class="rbtn">エフェクト＆プリセット</div>
          <div class="rbtn">段落</div>
          <div class="rbtn">整列</div>
          <div class="rbtn">トラッカー</div>
          <div class="rhead">文字</div>
          <div class="rsel"><div>Aller Display</div><div><span class="vchev"></span></div></div>
          <div class="rsel"><div>Regular</div><div><span class="vchev"></span></div></div>
          <div class="rrow first">${icon("tsize")}<span class="rval"><b>259</b> px</span><span class="tri"></span>${icon("leading")}</div>
          <div class="rrow">${icon("va")}<span class="rval rdim">メトリクス</span><span class="tri"></span>${icon("vak")}</div>
          <div class="rline"></div>
          <div class="rrow">${icon("lines")}<span class="rval short"><b>4</b> px</span><span class="tri"></span><span class="fillsel">塗りの</span></div>
          <div class="rline"></div>
          <div class="rrow">${icon("vscale")}<span class="rval short"><b>100</b> %</span><span class="tri"></span><span class="gap24"></span>${icon("hscale")}</div>
          <div class="rrow">${icon("baseline")}<span class="rval short"><b>0</b> px</span><span class="tri"></span><span class="gap24"></span><span class="ruby">あ</span></div>
          <div class="rline"></div>
          <div class="rstyles"><span>T</span><i>T</i><span>TT</span><span>Tт</span></div>
          <div class="rcheck"><span class="cb"></span>合字<span class="cb cb2"></span></div>
        </section>
      </div>

      <section class="timeline">
        <div class="ttabs">
          <div class="ttab w1"><i></i>0623motion</div>
          <div class="ttab w2"><i></i>0623motion fin</div>
          <div class="ttab w3"><i></i>0623motion 2</div>
          <div class="ttabactive"><span class="x">×</span><i></i>コンポ 2<span class="burger"></span></div>
        </div>
        <div class="tbody">
          <div class="tleft">
            <div class="ttop">
              <div class="tcode"><b>0:00:00:00</b><span>00000 (30.00 fps)</span></div>
              <div class="tsearch2">${icon("search")}</div>
              <div class="ttools"><span class="first">${icon("tlflow")}</span><span>${icon("shy")}</span><span>${icon("filmstack")}</span><span>${icon("blend")}</span><span class="last">${icon("curve")}</span></div>
            </div>
            <div class="thead">
              ${icon("eye")}${icon("speaker")}${icon("dot")}${icon("lock")}<span class="thg1"></span><span class="vline"></span>
              <span class="thg2"></span>${icon("tag")}<span class="thg1"></span><span class="vline"></span>
              <span class="thnum">#</span><span class="vline"></span>
              <span class="thname">ソース名</span>
            </div>
            <div class="trow layer">
              <span class="eyebox">${icon("eye")}</span><span class="g16"></span><span class="lbox"></span><span class="lbox"></span>
              <span class="g11"></span>${this.chev(true)}<span class="lsw"></span><span class="lnum">1</span>${icon("star", 12)}
              <span class="lname">シェイプレイヤー 1</span>
            </div>
            <div class="trow"><div class="rowinner" style="padding-left:92px">${this.chev(true)}<span class="m1 palt">コンテンツ</span></div></div>
            <div class="trow"><span class="eyebox">${icon("eye")}</span><div class="rowinner" style="padding-left:92px">${this.chev(false)}<span class="m3">楕円形 2</span></div><div class="mode">通常<span class="vchev"></span></div></div>
            <div class="trow"><span class="eyebox">${icon("eye")}</span><div class="rowinner" style="padding-left:92px">${this.chev(false)}<div class="sel1">楕円形 1</div></div><div class="mode">通常<span class="vchev"></span></div></div>
            <div class="trow"><div class="rowinner" style="padding-left:92px">${this.chev(false)}<span class="m2 palt">トランスフォーム</span></div><span class="reset">リセット</span></div>
          </div>
          <div class="tright">${this.timelineSvg()}</div>
        </div>
      </section>

      <div class="hl"></div>
      <svg class="ptr p2" width="18" height="18" viewBox="0 0 18 18"><path d="M9 0 18 18H0z" fill="#c79fe0"/></svg>
      <div class="callout c2">②塗りで色を選択</div>
      <div class="callout c1">①塗りを変更したいレイヤーを選択</div>
      <svg class="ptr p1" width="20" height="35" viewBox="0 0 20 35"><path d="M0 0h20L10 35z" fill="#c79fe0"/></svg>
    `;
  }
}
